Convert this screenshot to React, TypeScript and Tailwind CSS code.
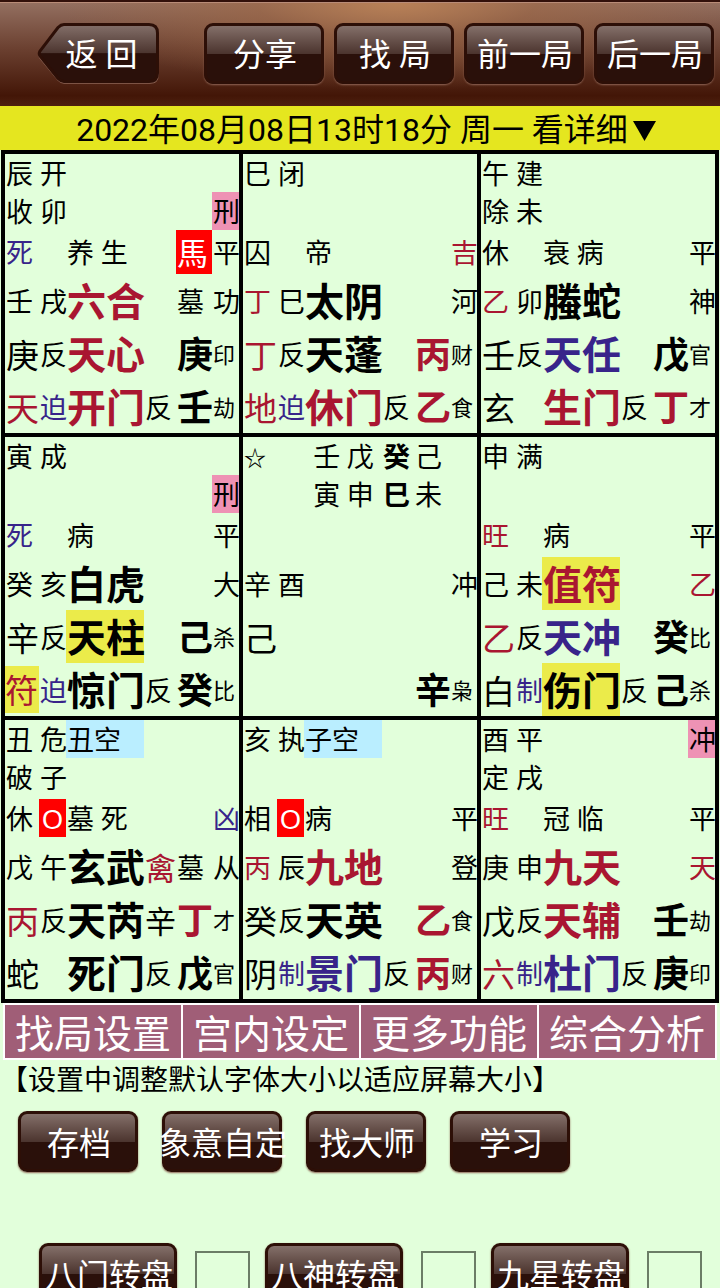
import React from "react";
import { clsx } from "clsx";

type Palace = string[][];

/* Each entry is "text" or "text|tone tone"; tones are the keys of TONES. */
const PALACES: Palace[] = [
  [
    ["辰", "开", "", "", "", ""],
    ["收", "卯", "", "", "", "刑|pink"],
    ["死|blue", "", "养 生", "", "馬|horse", "平"],
    ["壬", "戌", "六合|red", "", "墓", "功"],
    ["庚", "反", "天心|red", "", "庚", "印"],
    ["天|red", "迫|blue", "开门|red", "反", "壬", "劫"],
  ],
  [
    ["巳", "闭", "", "", "", ""],
    ["", "", "", "", "", ""],
    ["囚", "", "帝", "", "", "吉|red"],
    ["丁|red", "巳", "太阴", "", "", "河"],
    ["丁|red", "反", "天蓬", "", "丙|red", "财"],
    ["地|red", "迫|blue", "休门|red", "反", "乙|red", "食"],
  ],
  [
    ["午", "建", "", "", "", ""],
    ["除", "未", "", "", "", ""],
    ["休", "", "衰 病", "", "", "平"],
    ["乙|red", "卯", "螣蛇", "", "", "神"],
    ["壬", "反", "天任|blue", "", "戊", "官"],
    ["玄", "", "生门|red", "反", "丁|red", "才"],
  ],
  [
    ["寅", "成", "", "", "", ""],
    ["", "", "", "", "", "刑|pink"],
    ["死|blue", "", "病", "", "", "平"],
    ["癸", "亥", "白虎", "", "", "大"],
    ["辛", "反", "天柱|yellow", "", "己", "杀"],
    ["符|red tag", "迫|blue", "惊门", "反", "癸", "比"],
  ],
  [
    ["☆|small", "", "壬 戊|center", "癸|bold", "己", ""],
    ["", "", "寅 申|center", "巳|bold", "未", ""],
    ["", "", "", "", "", ""],
    ["辛", "酉", "", "", "", "冲"],
    ["己", "", "", "", "", ""],
    ["", "", "", "", "辛", "枭"],
  ],
  [
    ["申", "满", "", "", "", ""],
    ["", "", "", "", "", ""],
    ["旺|red", "", "病", "", "", "平"],
    ["己", "未", "值符|red yellow", "", "", "乙|red"],
    ["乙|red", "反", "天冲|blue", "", "癸", "比"],
    ["白", "制|blue", "伤门|yellow", "反", "己", "杀"],
  ],
  [
    ["丑", "危", "丑空|sky", "", "", ""],
    ["破", "子", "", "", "", ""],
    ["休", "O|mark", "墓 死", "", "", "凶|blue"],
    ["戊", "午", "玄武", "禽|red large", "墓", "从"],
    ["丙|red", "反", "天芮", "辛|large", "丁|red", "才"],
    ["蛇", "", "死门", "反", "戊", "官"],
  ],
  [
    ["亥", "执", "子空|sky", "", "", ""],
    ["", "", "", "", "", ""],
    ["相", "O|mark", "病", "", "", "平"],
    ["丙|red", "辰", "九地|red", "", "", "登"],
    ["癸", "反", "天英", "", "乙|red", "食"],
    ["阴", "制|blue", "景门|blue", "反", "丙|red", "财"],
  ],
  [
    ["酉", "平", "", "", "", "冲|pink"],
    ["定", "戌", "", "", "", ""],
    ["旺|red", "", "冠 临", "", "", "平"],
    ["庚", "申", "九天|red", "", "", "天|red"],
    ["戊", "反", "天辅|red", "", "壬", "劫"],
    ["六|red", "制|blue", "杜门|blue", "反", "庚", "印"],
  ],
];

const TONES: Record<string, string> = {
  red: "text-[#a91631]",
  blue: "text-[#38248a]",
  pink: "bg-[#ee92b4]",
  sky: "bg-[#baeeff]",
  yellow: "bg-[#ebeb4a]",
  horse: "bg-[#ff0000] text-[31px] text-white",
  mark: "text-center text-white",
  center: "text-center",
  bold: "font-bold",
};

const ROW_HEIGHTS = ["h-[38px]", "h-[38px]", "h-[44px]", "h-[53px]", "h-[53px]", "h-[53px]"];

function sizeOf(row: number, col: number, tones: string[]) {
  if (tones.includes("horse")) return "";
  if (tones.includes("large")) return "text-[31px]";
  if (tones.includes("small")) return "text-[22px]";
  if (row >= 3 && col === 2) return "text-[39px] font-bold";
  if (row >= 4 && col === 0) return "text-[33px]";
  if (row >= 4 && col === 4) return "text-[36px] font-bold";
  if (row >= 4 && col === 5) return "text-[22px]";
  return "text-[27px]";
}

function PalaceTable({ rows }: { rows: Palace }) {
  return (
    <table className="w-full table-fixed border-collapse bg-[#e2ffdb] leading-none">
      <colgroup>
        <col className="w-[34px]" />
        <col className="w-[27px]" />
        <col className="w-[78px]" />
        <col className="w-[32px]" />
        <col className="w-[36px]" />
        <col className="w-[27px]" />
      </colgroup>
      <tbody>
        {rows.map((cells, r) => (
          <tr key={r} className={ROW_HEIGHTS[r]}>
            {cells.map((cell, c) => {
              const [text, list = ""] = cell.split("|");
              const tones = list.split(" ");
              const boxed = tones.includes("mark") || tones.includes("tag");
              return (
                <td
                  key={c}
                  className={clsx(
                    "align-middle whitespace-nowrap",
                    boxed ? "p-0" : "pt-[5px] pr-0 pb-0 pl-px",
                    sizeOf(r, c, tones),
                    tones.map((t) => TONES[t]),
                  )}
                >
                  {tones.includes("mark") ? (
                    <span className="block bg-[#ff0000] pt-1 font-['Liberation_Sans',sans-serif] leading-[34px]">
                      {text}
                    </span>
                  ) : tones.includes("tag") ? (
                    <span className="block bg-[#ebeb4a] pt-[5px] leading-[42px]">{text}</span>
                  ) : (
                    text
                  )}
                </td>
              );
            })}
          </tr>
        ))}
      </tbody>
    </table>
  );
}

function GlossButton({ children, wide = false }: { children: React.ReactNode; wide?: boolean }) {
  return (
    <button
      type="button"
      className={clsx(
        "flex h-[61px] shrink-0 items-center justify-center rounded-[9px] border-[3px] border-[#2d0f07] bg-linear-to-b from-[#84706a] from-0% via-[#4c352f] via-50% to-[#2a100a] to-51% pt-1 pl-[2px] text-[32px] leading-none whitespace-nowrap text-white shadow-[0_1px_2px_#8d6455]",
        wide ? "w-[138px]" : "w-[120px]",
      )}
    >
      {children}
    </button>
  );
}

function BackButton() {
  return (
    <button type="button" className="relative h-[61px] w-[123px] shrink-0 pt-1 pl-[6px] text-[32px] leading-none text-white">
      <svg viewBox="0 0 123 61" className="absolute inset-0 h-full w-full" aria-hidden="true">
        <defs>
          <linearGradient id="gloss" x1="0" y1="0" x2="0" y2="1">
            <stop offset="0" stopColor="#84706a" />
            <stop offset="0.5" stopColor="#4c352f" />
            <stop offset="0.51" stopColor="#2a100a" />
            <stop offset="1" stopColor="#2a100a" />
          </linearGradient>
        </defs>
        <path
          d="M27 3.500 H113 Q121 3.500 121 11 V52 Q121 60 113 60 H27 Q24 60 21 57 L3 35 Q1 31.500 3 29 L21 6 Q24 3.500 27 3.500Z"
          fill="none"
          stroke="#8d6455"
          strokeWidth="1.500"
        />
        <path
          d="M27 1.500 H112 Q120.500 1.500 120.500 10 V50 Q120.500 58.500 112 58.500 H27 Q24 58.500 21 55.500 L3 33 Q1.500 30.500 3 28 L21 4.500 Q24 1.500 27 1.500Z"
          fill="url(#gloss)"
          stroke="#2d0f07"
          strokeWidth="3"
        />
      </svg>
      <span className="relative">返 回</span>
    </button>
  );
}

export default function App() {
  return (
    <div className="h-screen overflow-hidden bg-[#e2ffdb] font-['Roboto','Noto_Sans_CJK_SC',sans-serif] text-black">
      <header className="flex h-[106px] items-center justify-between border-t-2 border-[#32100a] bg-[radial-gradient(ellipse_at_55%_0%,#b98157_0%,#a0684490_25%,transparent_60%),linear-gradient(to_bottom,#947061,#6b4030_45%,#431607_90%,#4d200f)] pr-[6px] pb-[2px] pl-[37px] shadow-[inset_0_1px_0_#b98c78]">
        <BackButton />
        <nav className="flex gap-[10px]">
          <GlossButton>分享</GlossButton>
          <GlossButton>找 局</GlossButton>
          <GlossButton>前一局</GlossButton>
          <GlossButton>后一局</GlossButton>
        </nav>
      </header>

      <button
        type="button"
        className="flex h-[44px] w-full items-center justify-center bg-[#e5e61f] pt-1 pl-4 text-[32px] leading-none whitespace-nowrap"
      >
        2022年08月08日13时18分 周一 看详细
        <svg viewBox="0 0 32 32" className="h-8 w-8" aria-hidden="true">
          <path d="M5 7H28L16.500 27Z" fill="currentColor" />
        </svg>
      </button>

      <main>
        <section className="mx-px grid grid-cols-3 gap-1 bg-black p-1">
          {PALACES.map((rows, i) => (
            <PalaceTable key={i} rows={rows} />
          ))}
        </section>

        <nav className="mx-[3px] grid grid-cols-4 gap-[2px] bg-white p-[2px]">
          {["找局设置", "宫内设定", "更多功能", "综合分析"].map((label) => (
            <button
              key={label}
              type="button"
              className="h-[53px] bg-[#a05e77] pt-2 text-[39px] leading-none whitespace-nowrap text-white"
            >
              {label}
            </button>
          ))}
        </nav>

        <p className="text-[28px] leading-[42px] whitespace-nowrap">【设置中调整默认字体大小以适应屏幕大小】</p>

        <div className="mt-[9px] ml-[18px] flex gap-6">
          <GlossButton>存档</GlossButton>
          <GlossButton>象意自定</GlossButton>
          <GlossButton>找大师</GlossButton>
          <GlossButton>学习</GlossButton>
        </div>

        <div className="mt-[71px] ml-[39px] flex gap-[15px]">
          {["八门转盘", "八神转盘", "九星转盘"].map((label) => (
            <div key={label} className="flex items-center gap-[18px]">
              <GlossButton wide>{label}</GlossButton>
              <input
                type="text"
                aria-label={label}
                className="h-[46px] w-[55px] border-2 border-[#6b7d66] bg-transparent"
              />
            </div>
          ))}
        </div>
      </main>
    </div>
  );
}
